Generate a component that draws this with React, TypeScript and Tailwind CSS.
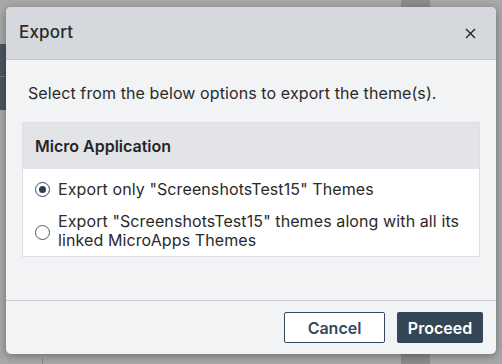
import React, { useState } from "react";

const options = [
  { id: "only", label: 'Export only "ScreenshotsTest15" Themes' },
  {
    id: "all",
    label: 'Export "ScreenshotsTest15" themes along with all its linked MicroApps Themes',
  },
];

function Radio({ checked }: { checked: boolean }) {
  return (
    <span
      className={
        "mt-[2px] flex h-[15px] w-[15px] shrink-0 items-center justify-center rounded-full border bg-white " +
        (checked ? "border-[#34495e]" : "border-[#555b62]")
      }
    >
      {checked && <span className="h-[7px] w-[7px] rounded-full bg-[#2f3d4c]" />}
    </span>
  );
}

export default function App() {
  const [selected, setSelected] = useState("only");

  return (
    <div className="relative h-[364px] w-[502px] overflow-hidden bg-[#a8a8a8] font-['Inter','Liberation_Sans',sans-serif]">
      {/* dimmed page behind the dialog */}
      <div className="absolute left-0 top-[44px] h-[66px] w-[6px] bg-[#4c5660]" />
      <div className="absolute left-0 top-[76px] h-px w-[6px] bg-[#7a7a7a]" />
      <div className="absolute left-[401px] top-0 h-[8px] w-[29px] bg-[#8c8c8c]" />
      <div className="absolute left-[401px] bottom-0 h-[10px] w-[29px] bg-[#8c8c8c]" />
      <div className="absolute left-[42px] bottom-0 h-[6px] w-px bg-[#8a8a8a]" />

      <div
        role="dialog"
        className="absolute left-[6px] top-[7px] flex h-[347px] w-[490px] flex-col overflow-hidden rounded-[5px] bg-[#f2f3f5] shadow-[0_2px_8px_rgba(0,0,0,0.35)]"
      >
        <div className="flex h-[53px] shrink-0 items-center justify-between border-b border-[#c3c6ca] bg-[#d5d8dc] pl-[13px] pr-[20px]">
          <h2 className="text-[17px] font-medium tracking-[0.2px] text-[#2b2b2b]">Export</h2>
          <button className="text-[#222]" aria-label="Close">
            <svg width="11" height="11" viewBox="0 0 11 11" fill="none" stroke="currentColor" strokeWidth="1.4">
              <path d="M1 1l9 9M10 1l-9 9" />
            </svg>
          </button>
        </div>

        <div className="flex-1 px-[16px] pt-[21px]">
          <p className="pl-[6px] text-[16px] tracking-[0.1px] text-[#2a2a2a]">
            Select from the below options to export the theme(s).
          </p>

          <div className="mt-[17px] border border-[#dcdee1] bg-white">
            <div className="flex h-[46px] items-center bg-[#e3e4e7] px-[12px] text-[16px] font-semibold text-[#262626]">
              Micro Application
            </div>
            <div className="flex flex-col gap-[13px] px-[12px] pb-[6px] pt-[11px]">
              {options.map((o) => (
                <label
                  key={o.id}
                  onClick={() => setSelected(o.id)}
                  className={
                    "flex cursor-pointer gap-[8px] text-[16px] leading-[19px] tracking-[0.1px] text-[#2a2a2a] " +
                    (o.id === "all" ? "items-center" : "items-start")
                  }
                >
                  <Radio checked={selected === o.id} />
                  <span>{o.label}</span>
                </label>
              ))}
            </div>
          </div>
        </div>

        <div className="flex h-[54px] shrink-0 items-start justify-end gap-[12px] border-t border-[#cbcdd1] pr-[13px] pt-[11px]">
          <button className="h-[31px] w-[101px] rounded-[2px] border border-[#34495e] bg-white text-[16px] font-semibold text-[#34495e]">
            Cancel
          </button>
          <button className="h-[31px] w-[86px] rounded-[2px] bg-[#354656] text-[16px] font-semibold text-white">
            Proceed
          </button>
        </div>
      </div>
    </div>
  );
}
